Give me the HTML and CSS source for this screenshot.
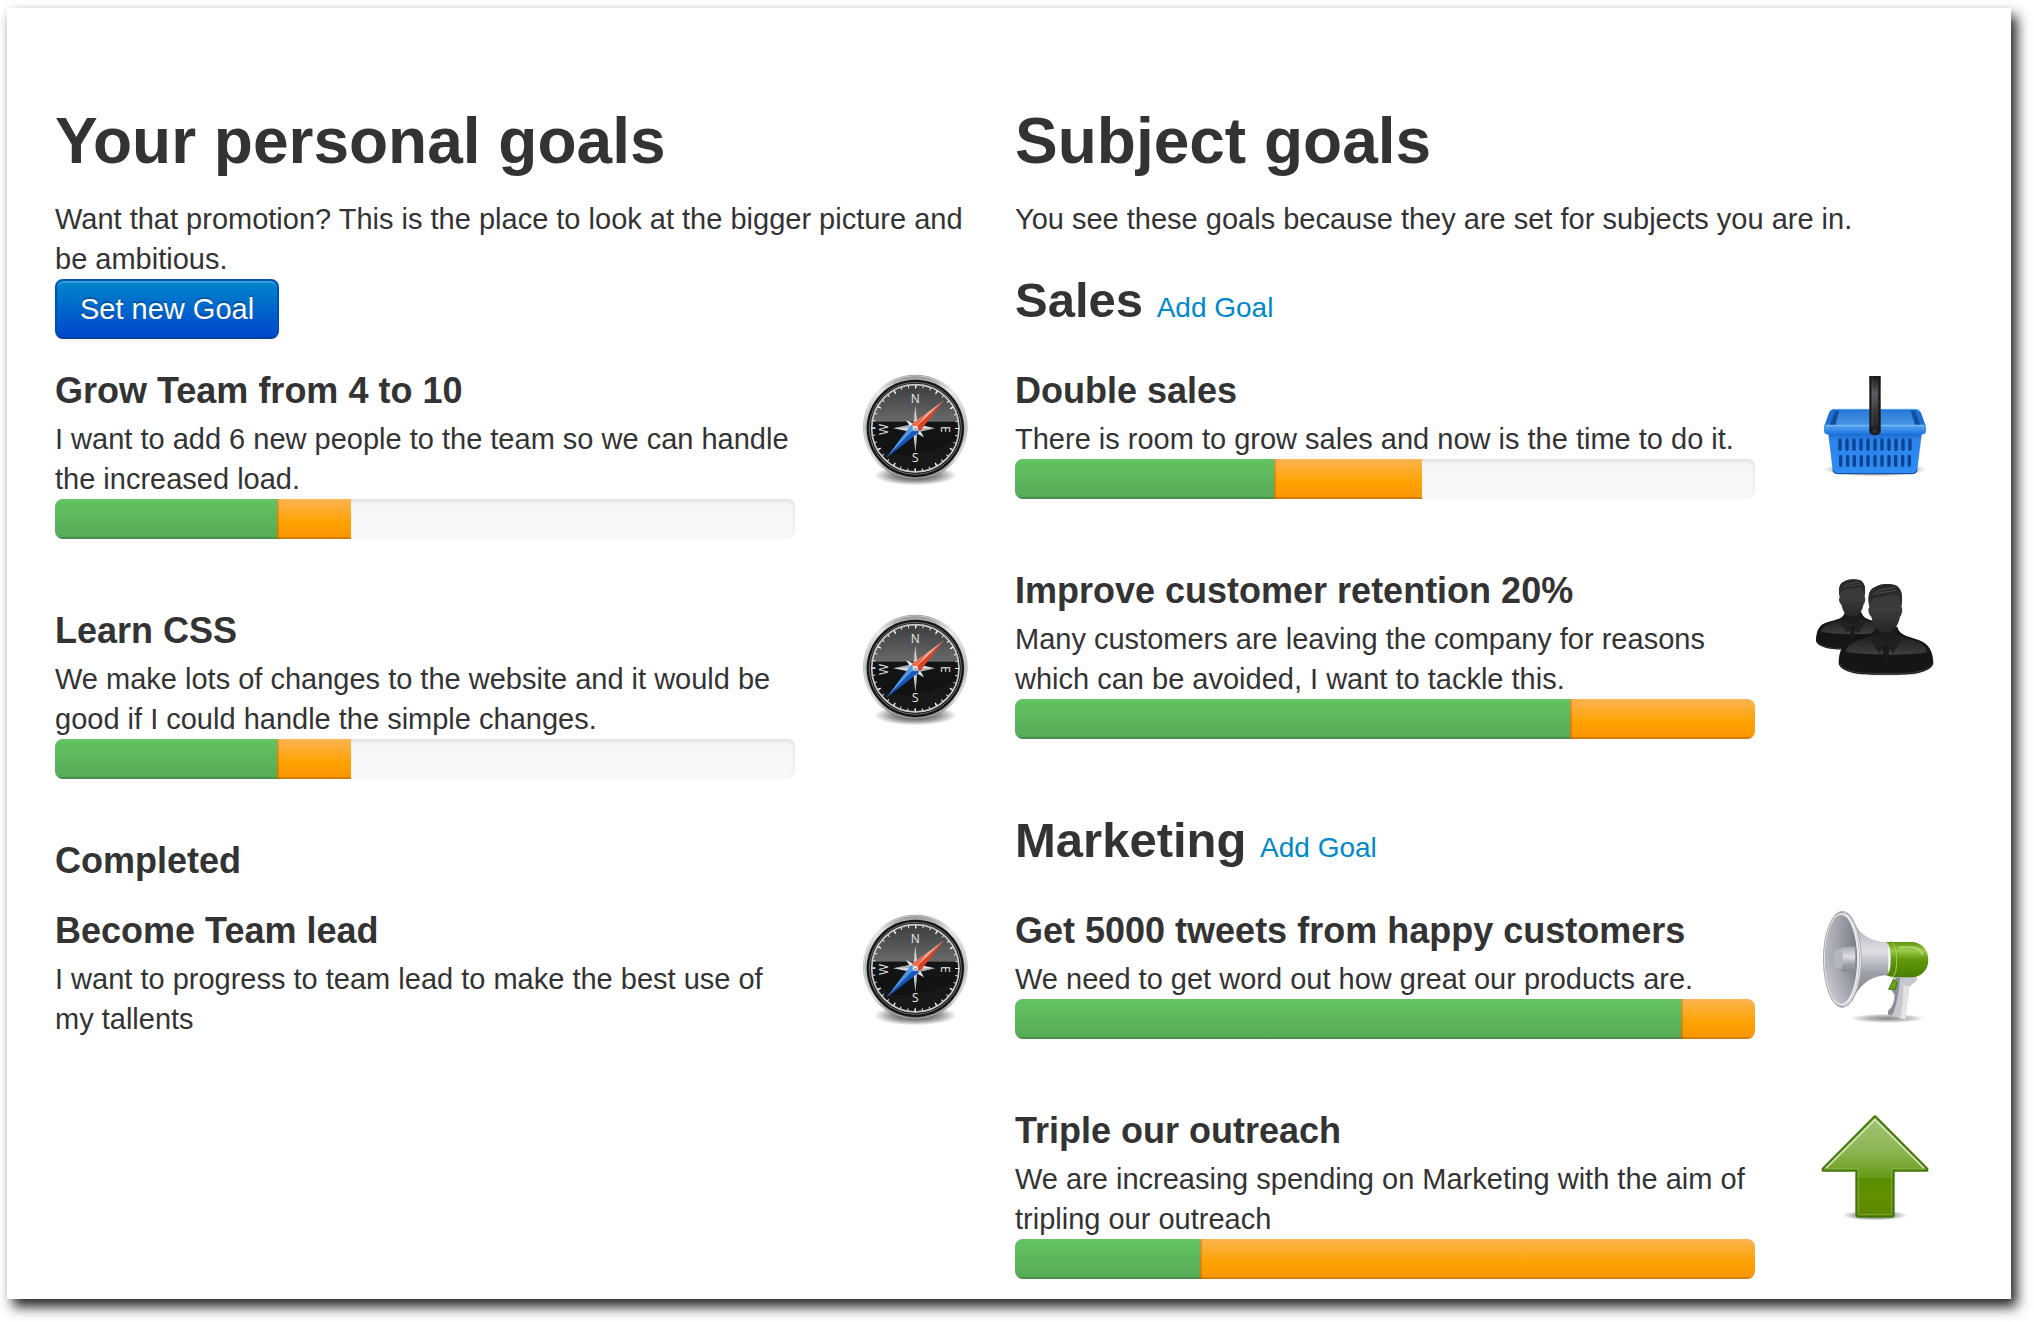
FILE: index.html
```html
<!DOCTYPE html>
<html lang="en">
<head>
<meta charset="utf-8">
<meta name="viewport" content="width=device-width, initial-scale=1">
<title>Goals</title>
<link rel="stylesheet" href="styles.css">
</head>
<body>
<svg class="sprite" aria-hidden="true">
  <defs>
    <linearGradient id="rim" x1="0" y1="0" x2="0" y2="1"><stop offset="0" stop-color="#8b8d8e"/><stop offset=".15" stop-color="#e4e6e6"/><stop offset=".5" stop-color="#b4b7b8"/><stop offset=".8" stop-color="#d2d4d5"/><stop offset="1" stop-color="#55585a"/></linearGradient>
    <linearGradient id="dial" x1="0" y1="0" x2="0" y2="1"><stop offset="0" stop-color="#3a3b3d"/><stop offset=".42" stop-color="#68696b"/><stop offset=".43" stop-color="#1b1c1e"/><stop offset="1" stop-color="#161719"/></linearGradient>
    <radialGradient id="ground"><stop offset="0" stop-color="#000" stop-opacity=".8"/><stop offset=".6" stop-color="#000" stop-opacity=".4"/><stop offset="1" stop-color="#000" stop-opacity="0"/></radialGradient>
    <symbol id="compass" viewBox="45 9 360 360" overflow="visible">
      <ellipse cx="226" cy="346" rx="124" ry="30" fill="url(#ground)"/>
      <circle cx="226" cy="201" r="157" fill="url(#rim)"/>
      <circle cx="226" cy="201" r="154" fill="none" stroke="#f2f3f3" stroke-width="3" opacity=".5"/>
      <circle cx="226" cy="205" r="146" fill="#151618"/>
      <circle cx="226" cy="205" r="138" fill="none" stroke="#6e7072" stroke-width="3"/>
      <circle cx="226" cy="205" r="134" fill="url(#dial)"/>
      <path d="M93 205Q105 300 226 284Q320 270 359 232A134 134 0 0 0 359 185H93Z" fill="#000" opacity=".25"/>
      <circle cx="226" cy="205" r="127" fill="none" stroke="#e6e7e8" stroke-width="10" stroke-dasharray="3 19.167" stroke-dashoffset="1"/>
      <circle cx="226" cy="205" r="126" fill="none" stroke="#f5f5f5" stroke-width="13" stroke-dasharray="4 61.97" stroke-dashoffset="2"/>
      <circle cx="226" cy="205" r="131" fill="none" stroke="#c8cacb" stroke-width="5"/>
      <path d="M226 138L232 193L285 205L232 217L226 276L220 217L160 205L220 193Z" fill="#dfe1e2"/>
      <path d="M226 138V205H285L232 217L226 276V205H160L220 193Z" fill="#8f9294" opacity=".6"/>
      <path d="M198 180L231 196L252 232L219 214Z" fill="#e4e6e7"/>
      <g class="dial-letters">
        <text x="226" y="128">N</text>
        <text x="226" y="307">S</text>
        <text transform="translate(304 208) rotate(90)" x="0" y="0">E</text>
        <text transform="translate(145 208) rotate(-90)" x="0" y="0">W</text>
      </g>
      <path d="M313 120L215 193L226 205Z" fill="#f2a896"/>
      <path d="M313 120L240 214L226 205Z" fill="#e0401f"/>
      <path d="M262 158L215 193L226 205Z" fill="#ee6a4c"/>
      <path d="M139 293L213 195L226 205Z" fill="#4f95e8"/>
      <path d="M139 293L238 216L226 205Z" fill="#1459bd"/>
      <circle cx="226" cy="205" r="8" fill="#e9eaea"/><circle cx="226" cy="207" r="4" fill="#a9a2a8"/>
    </symbol>
  </defs>
</svg>

<main class="panel">
  <section class="column">
    <h1>Your personal goals</h1>
    <p class="intro">Want that promotion? This is the place to look at the bigger picture and be ambitious.</p>
    <button class="btn" type="button">Set new Goal</button>

    <div class="goals">
      <article class="goal">
        <div>
          <h3>Grow Team from 4 to 10</h3>
          <p>I want to add 6 new people to the team so we can handle the increased load.</p>
          <div class="progress"><div class="bar done" style="width:30%"></div><div class="bar pending" style="width:10%"></div></div>
        </div>
        <svg class="icon" aria-hidden="true"><use href="#compass"/></svg>
      </article>
      <article class="goal">
        <div>
          <h3>Learn CSS</h3>
          <p>We make lots of changes to the website and it would be good if I could handle the simple changes.</p>
          <div class="progress"><div class="bar done" style="width:30%"></div><div class="bar pending" style="width:10%"></div></div>
        </div>
        <svg class="icon" aria-hidden="true"><use href="#compass"/></svg>
      </article>
    </div>

    <h3 class="completed">Completed</h3>
    <div class="goals">
      <article class="goal">
        <div>
          <h3>Become Team lead</h3>
          <p>I want to progress to team lead to make the best use of my tallents</p>
        </div>
        <svg class="icon" aria-hidden="true"><use href="#compass"/></svg>
      </article>
    </div>
  </section>

  <section class="column">
    <h1>Subject goals</h1>
    <p class="intro">You see these goals because they are set for subjects you are in.</p>

    <h2>Sales <a href="#add-sales">Add Goal</a></h2>
    <div class="goals">
      <article class="goal">
        <div>
          <h3>Double sales</h3>
          <p>There is room to grow sales and now is the time to do it.</p>
          <div class="progress"><div class="bar done" style="width:35%"></div><div class="bar pending" style="width:20%"></div></div>
        </div>
        <svg class="icon" viewBox="45 9 360 360" aria-hidden="true">
          <defs>
            <linearGradient id="bk-body" x1="0" y1="0" x2="0" y2="1"><stop offset="0" stop-color="#1a62c4"/><stop offset=".2" stop-color="#2b84ea"/><stop offset="1" stop-color="#2f8df5"/></linearGradient>
            <linearGradient id="bk-in" x1="0" y1="0" x2="0" y2="1"><stop offset="0" stop-color="#2a7ad8"/><stop offset="1" stop-color="#4794e6"/></linearGradient>
            <linearGradient id="bk-rim" x1="0" y1="0" x2="0" y2="1"><stop offset="0" stop-color="#5cabf3"/><stop offset="1" stop-color="#1d74de"/></linearGradient>
            <linearGradient id="bk-handle" x1="0" y1="0" x2="0" y2="1"><stop offset="0" stop-color="#17181a"/><stop offset=".3" stop-color="#5b5d62"/><stop offset=".6" stop-color="#36383c"/><stop offset="1" stop-color="#1d1f22"/></linearGradient>
          </defs>
          <ellipse cx="225" cy="328" rx="155" ry="22" fill="url(#ground)"/>
          <path d="M84 215H366L352 329Q350 341 338 341H112Q100 341 98 329Z" fill="url(#bk-body)"/>
          <path d="M98 329Q100 341 112 341H338Q350 341 352 329" fill="none" stroke="#123f80" stroke-width="3"/>
          <path d="M104 147H346Q358 147 363 158L378 200H72L87 158Q92 147 104 147Z" fill="#1d6fd3"/>
          <path d="M104 148H346Q357 149 362 158" fill="none" stroke="#62b0f3" stroke-width="3"/>
          <path d="M106 152H344L362 195H88Z" fill="url(#bk-in)"/>
          <path d="M106 152L118 152Q112 175 106 195H88ZM344 152H332Q340 178 345 195H362Z" fill="#12509f"/>
          <path d="M72 197Q80 192 92 194H358Q370 192 378 197V212Q378 223 366 223H84Q72 223 72 212Z" fill="url(#bk-rim)"/>
          <path d="M78 197H372" stroke="#79bdf7" stroke-width="3"/>
          <g stroke="#0d4290" stroke-width="10" stroke-linecap="round">
            <path d="M120 240V268M141 240V268M162 240V268M183 240V268M204 240V268M225 240V268M246 240V268M267 240V268M288 240V268M309 240V268M330 240V268"/>
            <path d="M122 289V316M143 289V316M163 289V316M184 289V316M204 289V316M225 289V316M246 289V316M267 289V316M287 289V316M308 289V316M328 289V316"/>
          </g>
          <path d="M208 48H242V216Q240 226 225 226Q210 226 208 216Z" fill="url(#bk-handle)"/>
          <path d="M212 50V214M238 50V214" stroke="#17181a" stroke-width="6"/>
          <path d="M216 52V200" stroke="#85878b" stroke-width="2" opacity=".5"/>
          <circle cx="224" cy="212" r="8" fill="#2e3033" stroke="#0e0f10" stroke-width="2"/>
        </svg>
      </article>
      <article class="goal">
        <div>
          <h3>Improve customer retention 20%</h3>
          <p>Many customers are leaving the company for reasons which can be avoided, I want to tackle this.</p>
          <div class="progress"><div class="bar done" style="width:75%"></div><div class="bar pending" style="width:25%"></div></div>
        </div>
        <svg class="icon" viewBox="45 9 360 360" aria-hidden="true">
          <defs>
            <linearGradient id="chest" x1="0" y1="0" x2="0" y2="1"><stop offset="0" stop-color="#1c1c1c"/><stop offset="1" stop-color="#3e3e3e"/></linearGradient>
            <linearGradient id="face" x1="0" y1="0" x2="0" y2="1"><stop offset="0" stop-color="#333"/><stop offset=".5" stop-color="#3c3c3c"/><stop offset="1" stop-color="#252525"/></linearGradient>
            <g id="person">
              <path d="M116 312C116 270 130 246 160 238C195 228 222 226 228 200H292C298 226 324 228 356 240C386 250 400 275 400 312C392 334 350 344 300 344H216C166 344 124 334 116 312Z" fill="#151515"/>
              <path d="M136 274C142 255 155 248 172 243L226 224H292L346 243C364 249 378 258 382 276C350 287 168 287 136 274Z" fill="url(#chest)"/>
              <path d="M120 311C128 331 168 340 216 340H300C350 340 388 331 396 311" fill="none" stroke="#3b3b3b" stroke-width="3"/>
              <path d="M208 142C202 108 206 88 226 81C240 72 262 70 284 75C304 82 310 104 304 140C309 142 307 164 300 170C296 192 286 206 276 214Q257 224 238 214C226 204 218 190 214 170C205 164 203 145 208 142Z" fill="url(#face)"/>
              <path d="M208 138C202 108 208 86 226 81C240 72 262 70 284 75C304 82 310 104 304 140C302 122 298 108 288 101C266 111 240 105 222 114C213 119 210 128 208 138Z" fill="#2a2a2a"/>
              <path d="M218 106C234 86 256 88 284 82M228 103C246 94 266 97 288 91" fill="none" stroke="#505050" stroke-width="3"/>
              <path d="M224 204Q258 232 292 204L286 230L258 250L230 230Z" fill="#1b1b1b"/>
              <path d="M222 226L208 240L238 280L256 252ZM292 226L306 240L278 280L260 252Z" fill="#202020"/>
              <path d="M258 250L268 262L264 300L258 308L252 300L248 262Z" fill="#191919"/>
            </g>
          </defs>
          <use href="#person" transform="translate(-42 2) scale(.775)"/>
          <ellipse cx="258" cy="340" rx="120" ry="8" fill="url(#ground)" opacity=".5"/>
          <use href="#person"/>
        </svg>
      </article>
    </div>

    <h2 class="next">Marketing <a href="#add-marketing">Add Goal</a></h2>
    <div class="goals">
      <article class="goal">
        <div>
          <h3>Get 5000 tweets from happy customers</h3>
          <p>We need to get word out how great our products are.</p>
          <div class="progress"><div class="bar done" style="width:90%"></div><div class="bar pending" style="width:10%"></div></div>
        </div>
        <svg class="icon" viewBox="45 24 360 360" aria-hidden="true">
          <defs>
            <linearGradient id="mg-in" x1="0" y1="0" x2="0" y2="1"><stop offset="0" stop-color="#9a9ca5"/><stop offset=".5" stop-color="#8b8d97"/><stop offset="1" stop-color="#e1e2e7"/></linearGradient>
            <linearGradient id="mg-side" x1="0" y1="0" x2="1" y2="0"><stop offset="0" stop-color="#d4d5db"/><stop offset="1" stop-color="#6c6e78"/></linearGradient>
            <linearGradient id="mg-horn" x1="0" y1="0" x2="0" y2="1"><stop offset="0" stop-color="#a9abb3"/><stop offset=".4" stop-color="#dfe0e6"/><stop offset=".7" stop-color="#9fa1aa"/><stop offset="1" stop-color="#85878f"/></linearGradient>
            <linearGradient id="mg-green" x1="0" y1="0" x2="0" y2="1"><stop offset="0" stop-color="#5b9407"/><stop offset=".25" stop-color="#9cc949"/><stop offset=".5" stop-color="#5f990a"/><stop offset="1" stop-color="#4b7d04"/></linearGradient>
          </defs>
          <ellipse cx="262" cy="370" rx="112" ry="14" fill="url(#ground)" opacity=".6"/>
          <path d="M160 80C185 128 225 140 265 142V241C225 241 190 258 165 300Z" fill="url(#mg-horn)"/>
          <path d="M278 245H350Q354 258 342 264L328 275Q324 305 320 340L316 374L264 359V348Q284 330 283 300L274 286Z" fill="#c5c7cd"/>
          <path d="M288 248H300Q296 310 280 354L274 362L264 358V348Q286 330 284 298L275 284Z" fill="#8c8e96"/>
          <path d="M328 275Q324 305 320 340L316 374L300 369Q312 320 310 270Z" fill="#e2e3e7"/>
          <path d="M280 254L291 261L286 283L266 283Z" fill="#6ba51a" stroke="#477606" stroke-width="3"/>
          <path d="M258 142Q268 139 285 141H334C365 141 385 165 385 194C385 224 364 247 334 247H285Q268 246 258 240Q272 236 272 194Q272 148 258 142Z" fill="url(#mg-green)"/>
          <path d="M276 143Q290 150 290 194Q290 238 278 246" fill="none" stroke="#a2cc55" stroke-width="3"/>
          <path d="M300 157H336Q360 159 367 177" fill="none" stroke="#c8e293" stroke-width="7" stroke-linecap="round" opacity=".6"/>
          <ellipse cx="127" cy="193" rx="58" ry="145" fill="#a3a5ad"/>
          <ellipse cx="125" cy="193" rx="53" ry="139" fill="#e7e8ec"/>
          <ellipse cx="123" cy="193" rx="48" ry="133" fill="url(#mg-in)"/>
          <ellipse cx="123" cy="193" rx="48" ry="133" fill="url(#mg-side)" opacity=".6"/>
          <path d="M114 163L132 155H166V231H134L114 223Z" fill="url(#mg-horn)"/>
          <path d="M113 163H124Q134 193 124 222H113Q100 218 98 193Q100 168 113 163Z" fill="#b4b6be"/>
          <path d="M132 52C158 67 181 122 181 193C181 265 158 322 132 335" fill="none" stroke="#f3f4f6" stroke-width="3"/>
        </svg>
      </article>
      <article class="goal">
        <div>
          <h3>Triple our outreach</h3>
          <p>We are increasing spending on Marketing with the aim of tripling our outreach</p>
          <div class="progress"><div class="bar done" style="width:25%"></div><div class="bar pending" style="width:75%"></div></div>
        </div>
        <svg class="icon" viewBox="45 9 360 360" aria-hidden="true">
          <defs>
            <linearGradient id="up" x1="0" y1="0" x2="0" y2="1"><stop offset="0" stop-color="#a3c475"/><stop offset=".35" stop-color="#8db553"/><stop offset=".615" stop-color="#679a18"/><stop offset=".62" stop-color="#5b8c00"/><stop offset=".8" stop-color="#638f00"/><stop offset="1" stop-color="#5a8400"/></linearGradient>
          </defs>
          <ellipse cx="225" cy="346" rx="98" ry="16" fill="url(#ground)" opacity=".8"/>
          <path d="M225 48L382 206V212H281V346Q281 350 277 350H173Q169 350 169 346V212H68V206Z" fill="url(#up)" stroke="#43780b" stroke-width="6" stroke-linejoin="round"/>
          <path d="M225 59L370 205H275V343H176V205H80Z" fill="none" stroke="#8bb64a" stroke-width="3" opacity=".7"/>
          <path d="M78 205L225 59L372 205" fill="none" stroke="#dbe9c6" stroke-width="4"/>
        </svg>
      </article>
    </div>
  </section>
</main>
</body>
</html>
```
FILE: styles.css
```css
* {
  box-sizing: border-box;
}

body {
  margin: 0;
  padding: 8px 23px 23px 7px;
  background: #fff;
  color: #333;
  font: 29px/40px "Liberation Sans", Arial, sans-serif;
}

h1, h2, h3, p {
  margin: 0;
}

.sprite {
  position: absolute;
  width: 0;
  height: 0;
}

.panel {
  display: grid;
  grid-template-columns: repeat(2, minmax(0, 1fr));
  gap: 40px;
  padding: 97px 76px 20px 48px;
  background: #fff;
  box-shadow: 6px 8px 12px rgba(0, 0, 0, .85), 0 0 6px rgba(0, 0, 0, .05);
}

h1 {
  margin-bottom: 22px;
  font-size: 64px;
  line-height: 72px;
}

h2 {
  margin: 24px 0 26px;
  font-size: 49px;
  line-height: 74px;
}

h2.next {
  margin-top: 64px;
}

h2 a {
  color: #08c;
  font-size: 28px;
  font-weight: normal;
  line-height: 40px;
  text-decoration: none;
}

h3 {
  font-size: 36px;
  line-height: 56px;
}

.completed {
  margin: 54px 0 14px;
}

.btn {
  display: block;
  height: 60px;
  margin-bottom: 24px;
  padding: 0 23px;
  border: 2px solid;
  border-color: #0055b8 #0050b0 #003f9c;
  border-radius: 8px;
  background: linear-gradient(#08c, #04c) border-box;
  box-shadow: inset 0 2px 0 rgba(255, 255, 255, .2), 0 2px 4px rgba(0, 0, 0, .05);
  color: #fff;
  font: inherit;
  text-shadow: 0 -2px 0 rgba(0, 0, 0, .25);
  cursor: pointer;
}

.goals {
  display: grid;
  gap: 64px;
}

.goal {
  display: grid;
  grid-template-columns: minmax(0, 1fr) 120px;
  gap: 60px;
  align-items: start;
}

.icon {
  width: 120px;
  height: 120px;
  overflow: visible;
}

.progress {
  display: flex;
  height: 40px;
  overflow: hidden;
  border-radius: 8px;
  background: linear-gradient(#f5f5f5, #f9f9f9);
  box-shadow: inset 0 2px 4px rgba(0, 0, 0, .1);
}

.bar {
  box-shadow: inset 0 -2px 0 rgba(0, 0, 0, .15);
}

.done {
  background: linear-gradient(#62c462, #57a957);
}

.pending {
  background: linear-gradient(#fbb450, #ffa200 60%, #f89406);
  box-shadow: inset 2px 0 0 rgba(0, 0, 0, .15), inset 0 -2px 0 rgba(0, 0, 0, .15);
}

.dial-letters {
  fill: #e8e9ea;
  font: 36px "Open Sans", sans-serif;
  text-anchor: middle;
}
```
